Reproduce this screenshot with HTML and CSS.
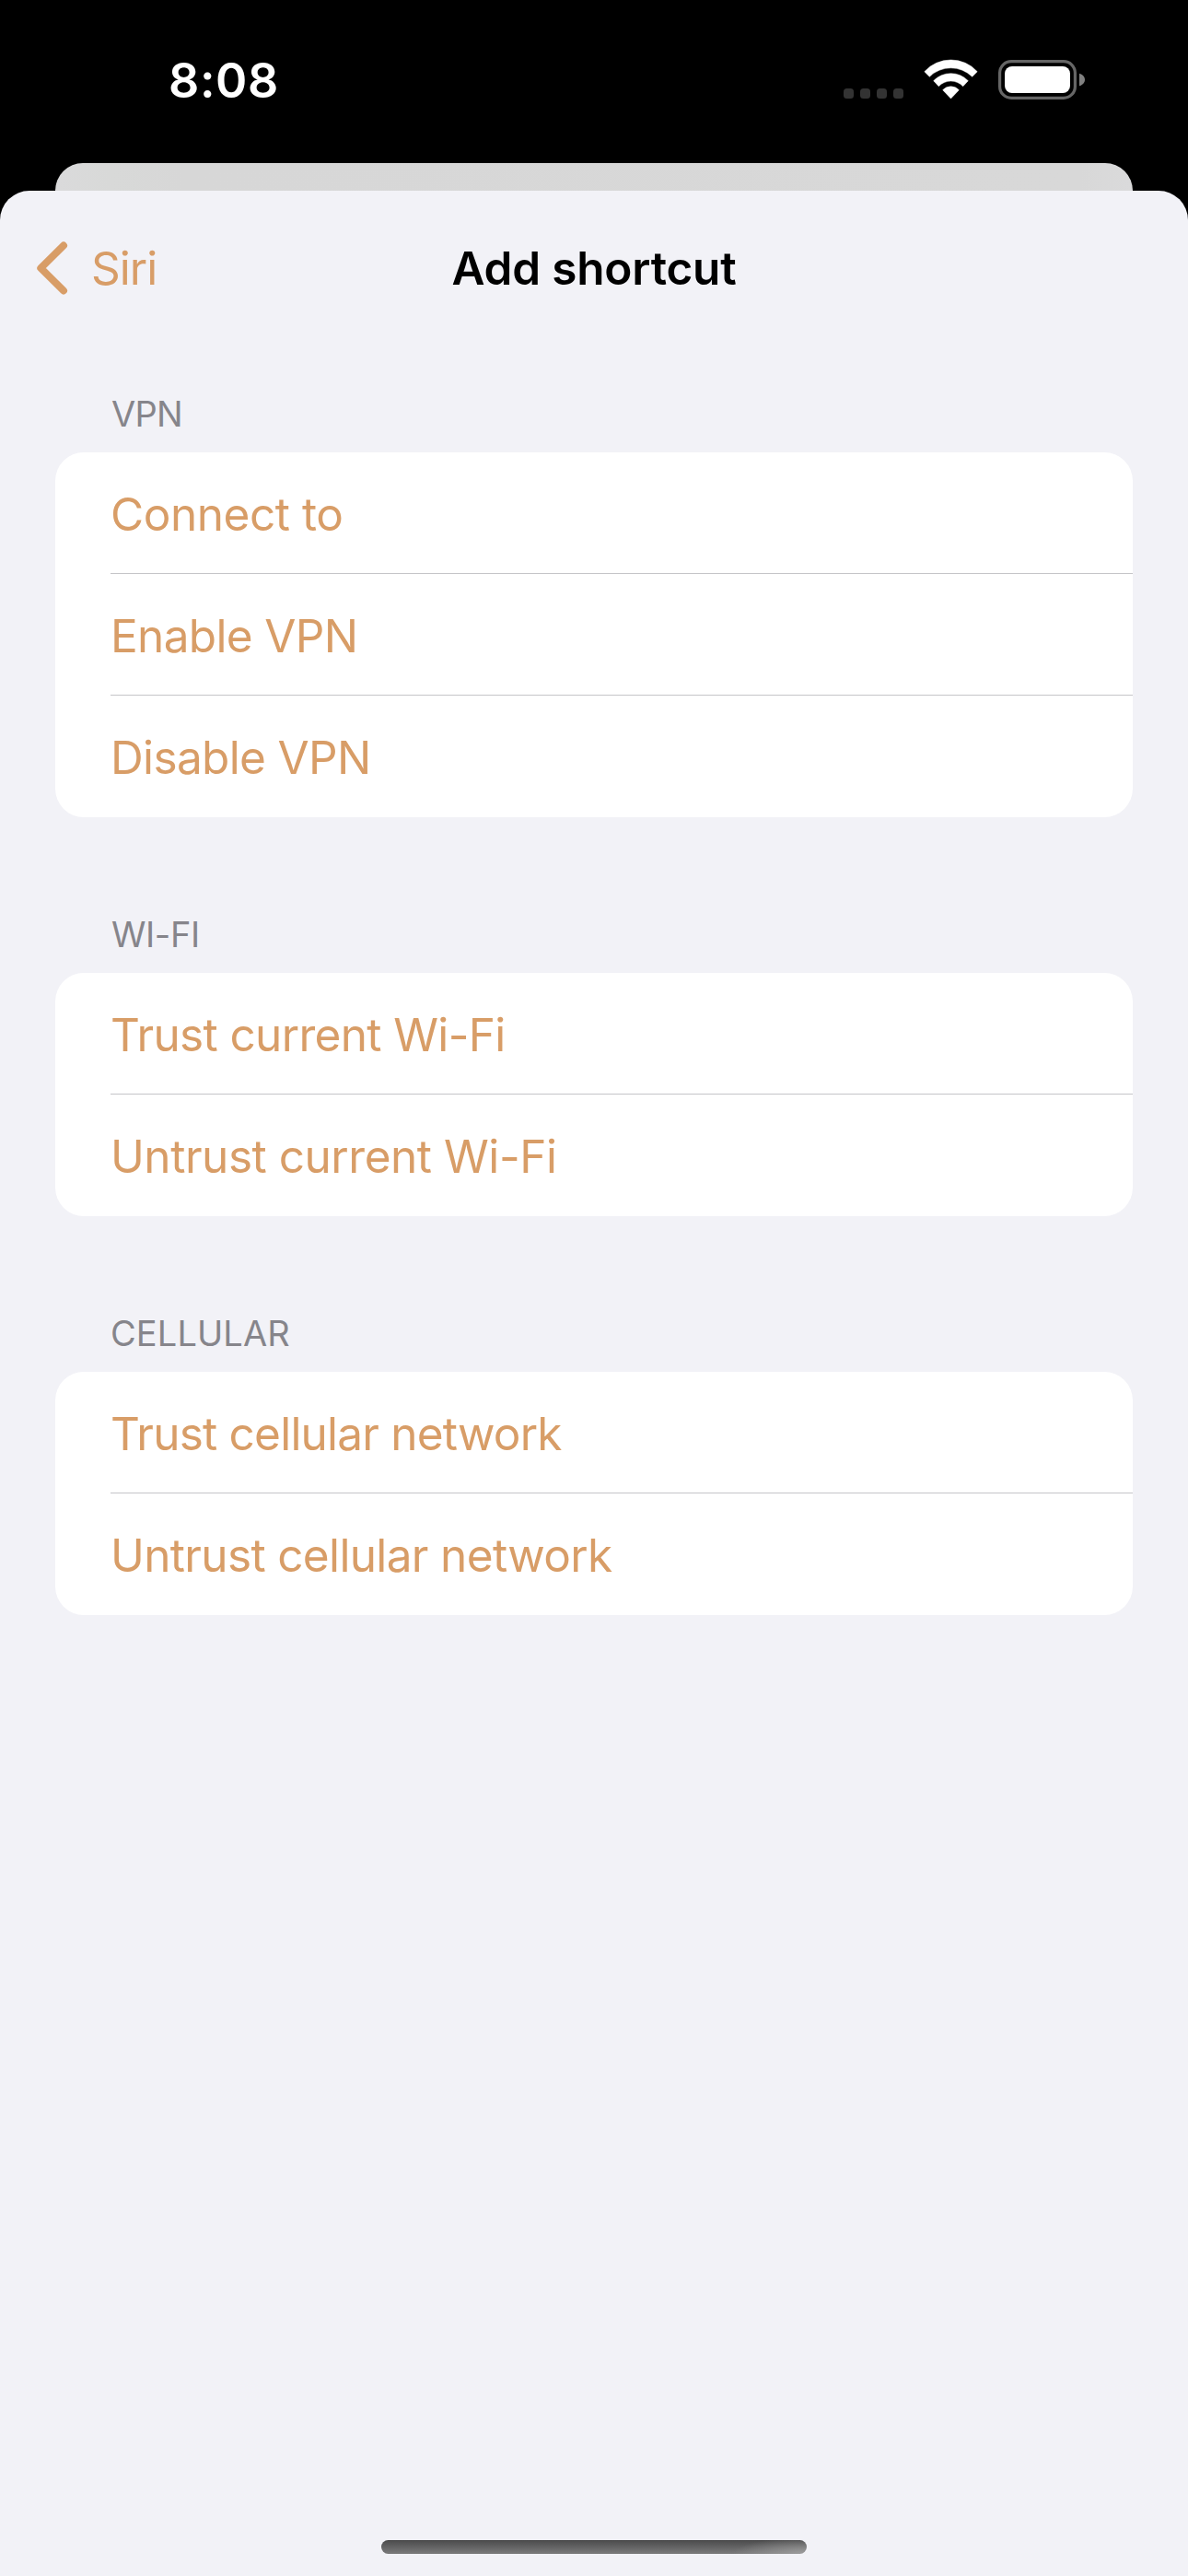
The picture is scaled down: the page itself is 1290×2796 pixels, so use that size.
FILE: index.html
```html
<!DOCTYPE html>
<html lang="en">
<head>
<meta charset="utf-8">
<title>Add shortcut</title>
<link rel="stylesheet" href="styles.css">
</head>
<body>
<div class="screen">
  <header class="status">
    <span class="time">8:08</span>
    <div class="indicators">
      <svg class="signal" width="65" height="44" viewBox="0 0 65 44">
        <rect x="0" y="32" width="11" height="11" rx="3.5"/>
        <rect x="18" y="32" width="11" height="11" rx="3.5"/>
        <rect x="36" y="32" width="11" height="11" rx="3.5"/>
        <rect x="54" y="32" width="11" height="11" rx="3.5"/>
      </svg>
      <svg class="wifi" width="59" height="44" viewBox="0 0 59 44">
        <path d="M.8 13.7A38.8 38.8 0 0 1 58.2 13.7L52.7 19.3A33 33 0 0 0 6.3 19.3Z"/>
        <path d="M10.7 23.7A26 26 0 0 1 48.3 23.7L42.7 29.7A18.2 18.2 0 0 0 16.3 29.7Z"/>
        <path d="M20.7 33.7A12 12 0 0 1 38.3 33.7L29.5 43Z"/>
      </svg>
      <svg class="battery" width="94" height="44" viewBox="0 0 94 44">
        <rect class="shell" x="1.6" y="2.6" width="81.8" height="39.8" rx="12.5"/>
        <rect class="charge" x="7" y="8" width="71" height="29" rx="8"/>
        <path class="nub" d="M88 15.7C91.5 16.6 94 19.3 94 22.5S91.500 28.400 88 29.300Z"/>
      </svg>
    </div>
  </header>
  <div class="sheet-behind"></div>
  <main class="sheet">
    <nav class="nav">
      <a class="back">
        <svg class="chevron" width="34" height="58" viewBox="0 0 34 58"><path d="M29 4.500L4.300 29L29 53.500"/></svg>
        <span class="back-label">Siri</span>
      </a>
      <h1 class="title">Add shortcut</h1>
    </nav>
    <div class="groups">
      <section class="group">
        <h2 class="heading tight">VPN</h2>
        <ul class="card">
          <li class="row"><span class="label wide">Connect to</span></li>
          <li class="row"><span class="label">Enable VPN</span></li>
          <li class="row"><span class="label">Disable VPN</span></li>
        </ul>
      </section>
      <section class="group">
        <h2 class="heading snug">WI-FI</h2>
        <ul class="card">
          <li class="row"><span class="label">Trust current Wi-Fi</span></li>
          <li class="row"><span class="label wide">Untrust current Wi-Fi</span></li>
        </ul>
      </section>
      <section class="group">
        <h2 class="heading">CELLULAR</h2>
        <ul class="card">
          <li class="row"><span class="label narrow">Trust cellular network</span></li>
          <li class="row"><span class="label">Untrust cellular network</span></li>
        </ul>
      </section>
    </div>
    <div class="home-indicator"></div>
  </main>
</div>
</body>
</html>
```
FILE: styles.css
```css
* {
  box-sizing: border-box;
}

body {
  margin: 0;
  background: #000;
  font-family: Inter, "Liberation Sans", sans-serif;
}

.screen {
  display: flex;
  flex-direction: column;
  width: 1290px;
  height: 2796px;
  overflow: hidden;
}

/* Status bar */
.status {
  display: flex;
  align-items: flex-start;
  justify-content: space-between;
  flex: none;
  height: 177px;
  padding: 58px 112px 0 183px;
}

.time {
  color: #fff;
  font-size: 52px;
  font-weight: 600;
  line-height: 60px;
  letter-spacing: 0.6px;
}

.indicators {
  display: flex;
  gap: 22px;
  margin-top: 6px;
}

.signal {
  fill: #333;
}

.wifi {
  fill: #fff;
  stroke: #fff;
  stroke-width: 0.5;
  stroke-linejoin: round;
}

.shell {
  fill: none;
  stroke: #666;
  stroke-width: 3.2;
}

.charge {
  fill: #fff;
}

.nub {
  fill: #808080;
}

/* Stacked sheets */
.sheet-behind {
  flex: none;
  height: 30px;
  margin: 0 60px;
  border-radius: 30px 30px 0 0;
  background: linear-gradient(90deg, #dadadb, #d8d9d8 60px, #d7d7d7 140px, #d8d8d8 95%, #dadadb);
}

.sheet {
  display: flex;
  flex-direction: column;
  flex: 1;
  border-radius: 32px 32px 0 0;
  background: #f2f2f7;
}

.nav {
  display: grid;
  grid-template-columns: 1fr auto 1fr;
  align-items: center;
  height: 168px;
  padding: 0 40px;
}

.back {
  display: flex;
  align-items: center;
  gap: 25px;
  color: #d89d67;
}

.chevron {
  fill: none;
  stroke: currentColor;
  stroke-width: 8;
  stroke-linecap: round;
  stroke-linejoin: round;
}

.back-label {
  font-size: 49.5px;
  line-height: 60px;
  letter-spacing: -1px;
}

.title {
  margin: 0;
  color: #000;
  font-size: 49.5px;
  font-weight: 600;
  line-height: 60px;
  letter-spacing: -0.2px;
}

/* Grouped lists */
.groups {
  display: flex;
  flex-direction: column;
  flex: 1;
  gap: 104px;
  padding: 51px 60px 0;
}

.heading {
  margin: 0 0 19px;
  padding-left: 60px;
  color: #86858b;
  font-size: 38px;
  font-weight: 400;
  line-height: 46px;
  letter-spacing: 0.1px;
}

.heading.snug {
  padding-left: 61px;
  letter-spacing: -0.4px;
}

.heading.tight {
  padding-left: 61px;
  letter-spacing: -0.8px;
}

.card {
  margin: 0;
  padding: 0 0 0 60px;
  border-radius: 31px;
  background: #fff;
  list-style: none;
}

.row {
  height: 132px;
  border-bottom: 1px solid #c5c5c8;
}

.row:last-child {
  border-bottom: 0;
}

.label {
  display: block;
  color: #d89d67;
  font-size: 49.5px;
  line-height: 134px;
  letter-spacing: -0.65px;
  white-space: nowrap;
}

.label.wide {
  letter-spacing: -0.46px;
}

.label.narrow {
  letter-spacing: -0.78px;
}

.home-indicator {
  align-self: center;
  width: 462px;
  height: 15px;
  margin-bottom: 24px;
  border-radius: 7.5px;
  background:
    radial-gradient(ellipse 80px 18px at 100% 100%, rgba(170, 170, 170, 0.75), rgba(170, 170, 170, 0)),
    linear-gradient(#4a4a4b, #7b7b7c);
}
```
